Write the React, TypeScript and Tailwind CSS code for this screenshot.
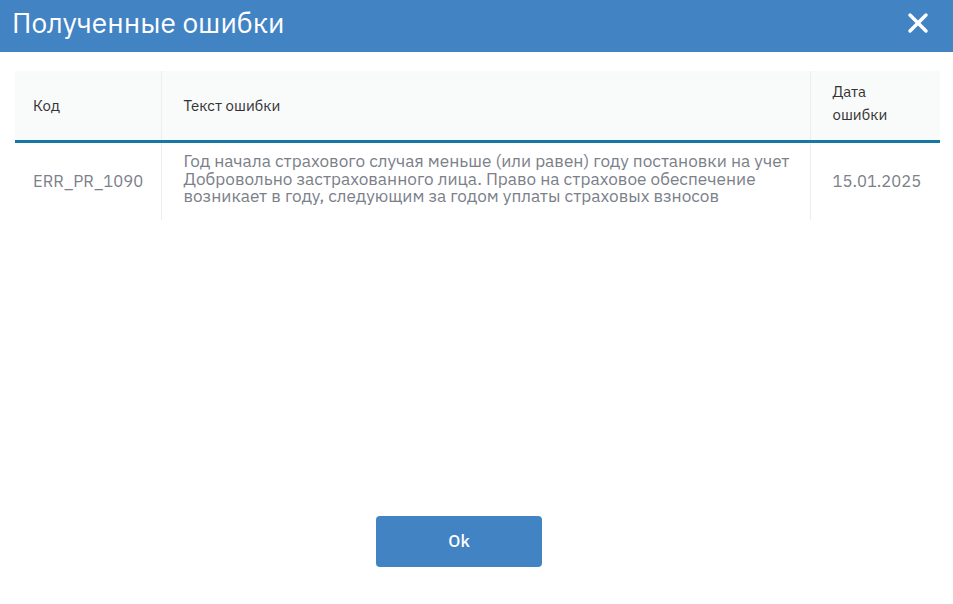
import { X } from 'lucide-react';

const FONT = { fontFamily: '"IBM Plex Sans", Roboto, "Noto Sans", sans-serif' };

export default function App() {
  return (
    <div className="flex h-[604px] w-[953px] flex-col bg-white" style={FONT}>
      {/* Title bar */}
      <div className="flex h-[52px] shrink-0 items-center justify-between bg-[#4283c4] pb-[6px] pl-3 pr-[19px]">
        <h1 className="text-[28px] font-normal leading-none text-white">Полученные ошибки</h1>
        <button type="button" className="text-white">
          <X className="h-[32px] w-[32px]" strokeWidth={2.6} />
        </button>
      </div>

      {/* Errors table */}
      <div className="px-[15px] pt-[19px]">
        <table className="w-[925px] table-fixed border-collapse">
          <colgroup>
            <col className="w-[146px]" />
            <col className="w-[649px]" />
            <col className="w-[130px]" />
          </colgroup>
          <thead>
            <tr className="h-[70px] border-b-[3px] border-[#1677a3] bg-[#f9fafa] text-left text-[15px] font-normal leading-[23px] text-[#333]">
              <th className="pl-[18px] pr-3 font-normal">Код</th>
              <th className="border-l border-[#ebedee] pl-[22px] pr-3 font-normal">Текст ошибки</th>
              <th className="border-l border-[#ebedee] pl-[22px] pr-3 pb-[4px] font-normal">
                Дата
                <br />
                ошибки
              </th>
            </tr>
          </thead>
          <tbody>
            <tr className="h-[79px] align-middle text-[16.6px] leading-[17.5px] text-[#7b8089]">
              <td className="pl-[18px] pr-2">ERR_PR_1090</td>
              <td className="border-l border-[#ebedee] pb-[6px] pl-[22px] pr-3 text-[17.2px]">
                Год начала страхового случая меньше (или равен) году постановки на учет Добровольно
                застрахованного лица. Право на страховое обеспечение возникает в году, следующим за
                годом уплаты страховых взносов
              </td>
              <td className="border-l border-[#ebedee] pl-[22px] pr-2">15.01.2025</td>
            </tr>
          </tbody>
        </table>
      </div>

      {/* Footer */}
      <div className="mt-auto flex justify-center pb-[37px] pr-[35px]">
        <button
          type="button"
          className="h-[51px] w-[166px] rounded bg-[#4283c4] text-[17px] font-medium text-white"
        >
          Ok
        </button>
      </div>
    </div>
  );
}
